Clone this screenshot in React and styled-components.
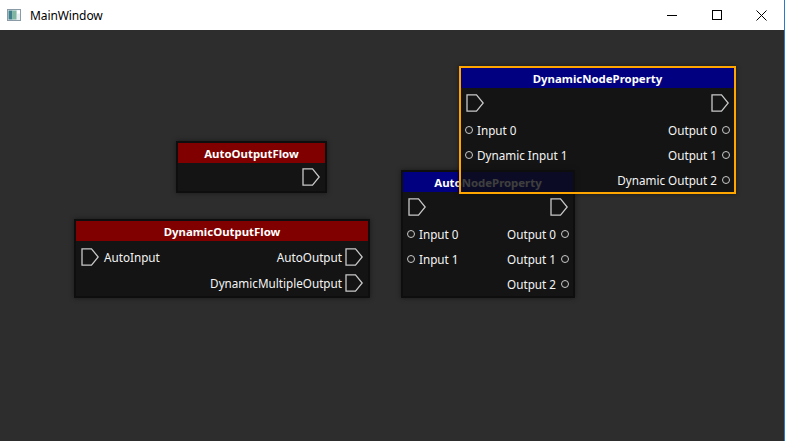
import React from "react";
import styled, { createGlobalStyle } from "styled-components";

/* node editor window - canvas with a few graph nodes */

const GlobalStyle = createGlobalStyle`
    html, body {
        margin: 0;
        padding: 0;
        background: #2d2d2d;
    }
    body {
        font-family: "Noto Sans", "Open Sans", sans-serif;
    }
`

const Window = styled.div`
    display: flex;
    flex-direction: column;
    width: 785px;
    height: 441px;
    box-sizing: border-box;
    border-right: 1px solid #2b79c9;
    overflow: hidden;
`

const TitleBar = styled.header`
    display: flex;
    align-items: center;
    height: 30px;
    flex: 0 0 30px;
    background: #ffffff;
    color: #000000;
    font-size: 12px;
`

const TitleIcon = styled.span`
    display: flex;
    margin: 0 9px 0 7px;
`

const TitleText = styled.span`
    flex: 1;
    letter-spacing: -0.1px;
`

const WindowButton = styled.span`
    display: flex;
    align-items: center;
    justify-content: center;
    width: 45px;
    height: 30px;
`

const Canvas = styled.main`
    position: relative;
    flex: 1;
    background: #2d2d2d;
`

const NodeBox = styled.section`
    position: absolute;
    box-sizing: border-box;
    border: 2px solid ${(p) => (p.$selected ? "#ffa500" : "#0e0e0e")};
    background: rgba(14, 14, 14, 0.8);
    box-shadow: 0 0 5px rgba(0, 0, 0, 0.45);
    color: #f4f4f4;
`

const Header = styled.div`
    display: flex;
    align-items: center;
    justify-content: center;
    height: 20px;
    background: ${(p) => p.$color};
    font-size: 11.4px;
    font-weight: 700;
    color: #ffffff;
`

const Body = styled.div`
    display: flex;
    flex-direction: column;
    padding: ${(p) => p.$pad || "0"} 3px 0 3px;
`

const Row = styled.div`
    display: flex;
    align-items: center;
    justify-content: space-between;
    height: ${(p) => p.$h}px;
    padding: 0 ${(p) => p.$side}px;
    font-size: 11.7px;
    white-space: nowrap;
`

const Side = styled.div`
    display: flex;
    align-items: center;
    gap: ${(p) => p.$gap}px;
`

const Dot = styled.span`
    display: block;
    box-sizing: border-box;
    width: 8px;
    height: 8px;
    border-radius: 50%;
    border: 1.3px solid #c9c9c9;
    background: #181818;
`

const FlowPort = () => (
    <svg width="18" height="18" viewBox="0 0 18 18">
        <path d="M1 0.8 H10.5 L17.2 9 L10.5 17.2 H1 Z" fill="none" stroke="#c8c8c8" strokeWidth="1.3" strokeLinejoin="miter" />
    </svg>
)

const nodes = [
    {
        id: "auto-output-flow",
        title: "AutoOutputFlow",
        color: "#800000",
        x: 176, y: 111, w: 151,
        pad: "0",
        rows: [{ h: 28, flow: true, left: null, right: "" }],
    },
    {
        id: "dynamic-output-flow",
        title: "DynamicOutputFlow",
        color: "#800000",
        x: 74, y: 189, w: 296,
        pad: "3px",
        rows: [
            { h: 26, flow: true, left: "AutoInput", right: "AutoOutput" },
            { h: 26, flow: true, left: null, right: "DynamicMultipleOutput" },
        ],
    },
    {
        id: "auto-node-property",
        title: "AutoNodeProperty",
        color: "#000080",
        x: 401, y: 140, w: 174,
        pad: "0",
        rows: [
            { h: 29, flow: true, left: "", right: "" },
            { h: 25, left: "Input 0", right: "Output 0" },
            { h: 25, left: "Input 1", right: "Output 1" },
            { h: 25, left: null, right: "Output 2" },
        ],
    },
    {
        id: "dynamic-node-property",
        title: "DynamicNodeProperty",
        color: "#000080",
        selected: true,
        x: 459, y: 36, w: 277,
        pad: "0",
        rows: [
            { h: 29, flow: true, left: "", right: "" },
            { h: 25, left: "Input 0", right: "Output 0" },
            { h: 25, left: "Dynamic Input 1", right: "Output 1" },
            { h: 25, left: null, right: "Dynamic Output 2" },
        ],
    },
]

const Node = ({ node }) => {
    const { title, color, selected, x, y, w, pad, rows } = node;

    return (
        <NodeBox $selected={selected} style={{ left: x, top: y, width: w }}>
            <Header $color={color}>{title}</Header>
            <Body $pad={pad}>
                {rows.map((r, i) => (
                    <Row key={i} $h={r.h} $side={r.flow ? 2 : 1}>
                        <Side $gap={r.flow ? 5 : 4}>
                            {r.left !== null && (r.flow ? <FlowPort /> : <Dot />)}
                            {r.left ? <span>{r.left}</span> : null}
                        </Side>
                        <Side $gap={r.flow ? 3 : 5}>
                            {r.right ? <span>{r.right}</span> : null}
                            {r.right !== null && (r.flow ? <FlowPort /> : <Dot />)}
                        </Side>
                    </Row>
                ))}
            </Body>
        </NodeBox>
    )
}

const App = () => {
    return (
        <Window>
            <GlobalStyle />
            <TitleBar>
                <TitleIcon>
                    <svg width="14" height="12" viewBox="0 0 14 12">
                        <rect x="0.5" y="0.5" width="13" height="11" fill="#e8eef2" stroke="#8a9aa6" />
                        <rect x="1.5" y="1.5" width="4" height="9" fill="#3f7f8c" />
                        <rect x="5.5" y="1.5" width="4" height="9" fill="#7fb6a0" />
                        <rect x="10" y="1.5" width="3" height="3" fill="#ffffff" />
                    </svg>
                </TitleIcon>
                <TitleText>MainWindow</TitleText>
                <WindowButton>
                    <svg width="10" height="10" viewBox="0 0 10 10">
                        <path d="M0 5.5 H10" stroke="#000" strokeWidth="1" />
                    </svg>
                </WindowButton>
                <WindowButton>
                    <svg width="10" height="10" viewBox="0 0 10 10">
                        <rect x="0.5" y="0.5" width="9" height="9" fill="none" stroke="#000" strokeWidth="1" />
                    </svg>
                </WindowButton>
                <WindowButton>
                    <svg width="11" height="11" viewBox="0 0 11 11">
                        <path d="M0.5 0.5 L10.5 10.5 M10.5 0.5 L0.5 10.5" stroke="#000" strokeWidth="1" />
                    </svg>
                </WindowButton>
            </TitleBar>
            <Canvas>
                {nodes.map((n) => (
                    <Node key={n.id} node={n} />
                ))}
            </Canvas>
        </Window>
    )
}

export default App;
